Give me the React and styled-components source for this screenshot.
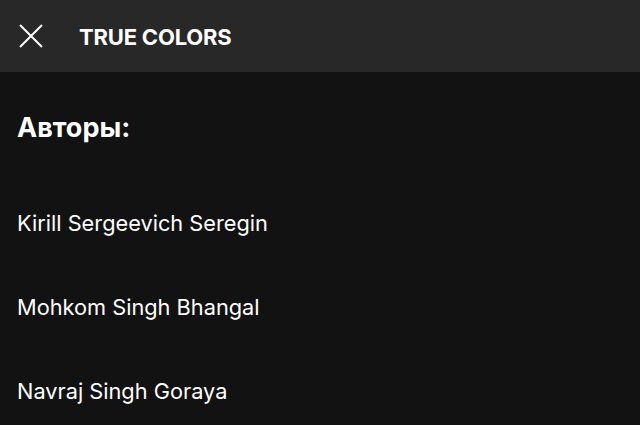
import React from "react";
import styled, { createGlobalStyle } from "styled-components";

const Global = createGlobalStyle`
  html, body { margin: 0; padding: 0; background: #121212; }
  body { font-family: "Inter", "Noto Sans", sans-serif; color: #fff; }
`;

const Page = styled.div`
  width: 640px;
  height: 425px;
  background: #121212;
  display: flex;
  flex-direction: column;
  overflow: hidden;
`;

const Header = styled.header`
  height: 72px;
  background: #282828;
  display: flex;
  align-items: center;
  padding-left: 19px;
  gap: 36px;
  flex-shrink: 0;
`;

const CloseButton = styled.button`
  width: 24px;
  height: 24px;
  padding: 0;
  margin-top: -1px;
  border: 0;
  background: none;
  display: flex;
  color: #fff;
`;

const Title = styled.h1`
  margin: 2px 0 0;
  font-size: 22px;
  line-height: 26px;
  font-weight: 700;
  letter-spacing: -0.2px;
  color: #fff;
`;

const Content = styled.main`
  padding: 40px 17px 0;
  display: flex;
  flex-direction: column;
`;

const Heading = styled.h2`
  margin: 0 0 65px;
  font-size: 27px;
  font-weight: 700;
  line-height: 32px;
`;

const List = styled.ul`
  list-style: none;
  margin: 0;
  padding: 0;
  display: flex;
  flex-direction: column;
  gap: 56px;
`;

const Item = styled.li`
  font-size: 21.75px;
  line-height: 28px;
  color: #fff;
`;

const authors = ["Kirill Sergeevich Seregin", "Mohkom Singh Bhangal", "Navraj Singh Goraya"];

export default function App() {
  return (
    <Page>
      <Global />
      <Header>
        <CloseButton aria-label="Закрыть">
          <svg width="24" height="24" viewBox="0 0 24 24" fill="none" stroke="currentColor" strokeWidth="2">
            <path d="M1 1 L23 23 M23 1 L1 23" />
          </svg>
        </CloseButton>
        <Title>TRUE COLORS</Title>
      </Header>
      <Content>
        <Heading>Авторы:</Heading>
        <List>
          {authors.map((a) => (
            <Item key={a}>{a}</Item>
          ))}
        </List>
      </Content>
    </Page>
  );
}
